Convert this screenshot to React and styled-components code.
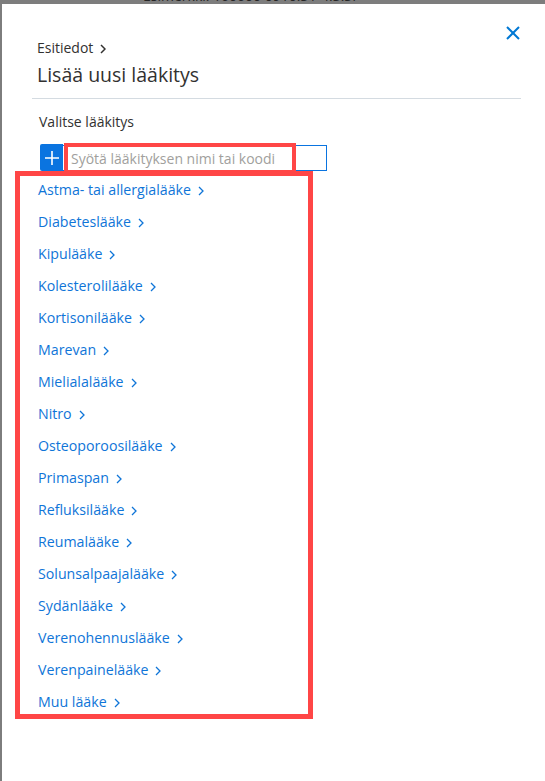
import React from 'react';
import styled, { createGlobalStyle } from 'styled-components';

const GlobalStyle = createGlobalStyle`
  html, body {
    margin: 0;
    padding: 0;
    background: #7d7d7d;
  }
  body {
    font-family: "Segoe UI", "Open Sans", "Noto Sans", sans-serif;
    color: #323130;
  }
`;

const categories = [
    'Astma- tai allergialääke',
    'Diabeteslääke',
    'Kipulääke',
    'Kolesterolilääke',
    'Kortisonilääke',
    'Marevan',
    'Mielialalääke',
    'Nitro',
    'Osteoporoosilääke',
    'Primaspan',
    'Refluksilääke',
    'Reumalääke',
    'Solunsalpaajalääke',
    'Sydänlääke',
    'Verenohennuslääke',
    'Verenpainelääke',
    'Muu lääke',
];

const Chevron = ({ color = 'currentColor', weight = 1.3 }) => (
    <svg width="6" height="10" viewBox="0 0 6 10" fill="none">
        <path d="M1 1l4 4-4 4" stroke={color} strokeWidth={weight} />
    </svg>
);

const App = () => {
    return (
        <Page>
            <GlobalStyle />
            <Backdrop>
                <BackdropText>Esimerkki: 160600 0910.31-4.3.3F</BackdropText>
            </Backdrop>
            <Panel>
                <Header>
                    <div>
                        <Crumb>
                            Esitiedot <Chevron weight={1.5} />
                        </Crumb>
                        <Title>Lisää uusi lääkitys</Title>
                    </div>
                    <CloseButton aria-label="Sulje">
                        <svg width="14" height="14" viewBox="0 0 14 14">
                            <path d="M1 1l12 12M13 1L1 13" stroke="#0078d4" strokeWidth="2" />
                        </svg>
                    </CloseButton>
                </Header>
                <Divider />
                <Body>
                    <Label>Valitse lääkitys</Label>
                    <SearchRow>
                        <AddButton>
                            <svg width="14" height="14" viewBox="0 0 14 14">
                                <path d="M7 0v14M0 7h14" stroke="#fff" strokeWidth="1.6" />
                            </svg>
                        </AddButton>
                        <SearchInput placeholder="Syötä lääkityksen nimi tai koodi" />
                        <Highlight />
                    </SearchRow>
                    <CategoryList>
                        {categories.map(name => (
                            <Category key={name}>
                                {name} <Chevron />
                            </Category>
                        ))}
                    </CategoryList>
                </Body>
            </Panel>
        </Page>
    );
};

export default App;

const Page = styled.div`
    min-height: 781px;
    display: flex;
    flex-direction: column;
`;

const Backdrop = styled.div`
    height: 4px;
    overflow: hidden;
    padding-left: 143px;
`;

const BackdropText = styled.div`
    margin-top: -12px;
    font-size: 14px;
    line-height: 16px;
    color: #262626;
`;

const Panel = styled.div`
    flex: 1;
    margin-left: 2px;
    background: #fff;
    padding: 0 24px 40px 28px;
`;

const Header = styled.div`
    display: flex;
    justify-content: space-between;
    align-items: flex-start;
    padding: 34px 0 0 7px;
`;

const Crumb = styled.div`
    display: flex;
    align-items: center;
    gap: 7px;
    font-size: 14px;
    line-height: 20px;
    color: #323130;
    svg {
        margin-top: 1px;
    }
`;

const Title = styled.h1`
    margin: 3px 0 0;
    font-size: 19.5px;
    font-weight: 400;
    line-height: 28px;
    color: #323130;
`;

const CloseButton = styled.button`
    border: 0;
    background: none;
    padding: 0;
    margin: -12px 1px 0 0;
    width: 14px;
    height: 14px;
    display: flex;
    cursor: pointer;
`;

const Divider = styled.hr`
    margin: 9px 0 0 2px;
    border: 0;
    border-top: 1px solid #d4dbe1;
`;

const Body = styled.div`
    padding-left: 9px;
`;

const Label = styled.div`
    margin-top: 13px;
    font-size: 14px;
    line-height: 20px;
    color: #323130;
`;

const SearchRow = styled.div`
    position: relative;
    display: flex;
    margin-top: 13px;
    margin-left: 1px;
    height: 26px;
`;

const AddButton = styled.button`
    width: 23px;
    height: 27px;
    margin-top: -1px;
    border: 0;
    border-radius: 2px 0 0 2px;
    background: #0a74e0;
    display: flex;
    align-items: center;
    justify-content: center;
    padding: 0;
`;

const SearchInput = styled.input`
    width: 264px;
    box-sizing: border-box;
    border: 1px solid #0a74e0;
    border-left: 0;
    outline: none;
    padding: 0 0 0 8px;
    font-family: inherit;
    font-size: 14px;
    color: #323130;
    &::placeholder {
        color: #a19f9d;
    }
`;

const Highlight = styled.span`
    position: absolute;
    left: 24px;
    top: -2px;
    width: 232px;
    height: 31px;
    box-sizing: border-box;
    border: 4px solid #ff4646;
    pointer-events: none;
`;

const CategoryList = styled.ul`
    list-style: none;
    margin: 0 0 0 -24px;
    width: 298px;
    box-sizing: border-box;
    border: 5px solid #ff4646;
    padding: 4px 0 2px 18px;
    display: grid;
    row-gap: 12px;
`;

const Category = styled.li`
    display: flex;
    align-items: center;
    gap: 7px;
    font-size: 14.2px;
    line-height: 20px;
    color: #0f75d8;
    cursor: pointer;
    svg {
        margin-top: 2px;
    }
`;
